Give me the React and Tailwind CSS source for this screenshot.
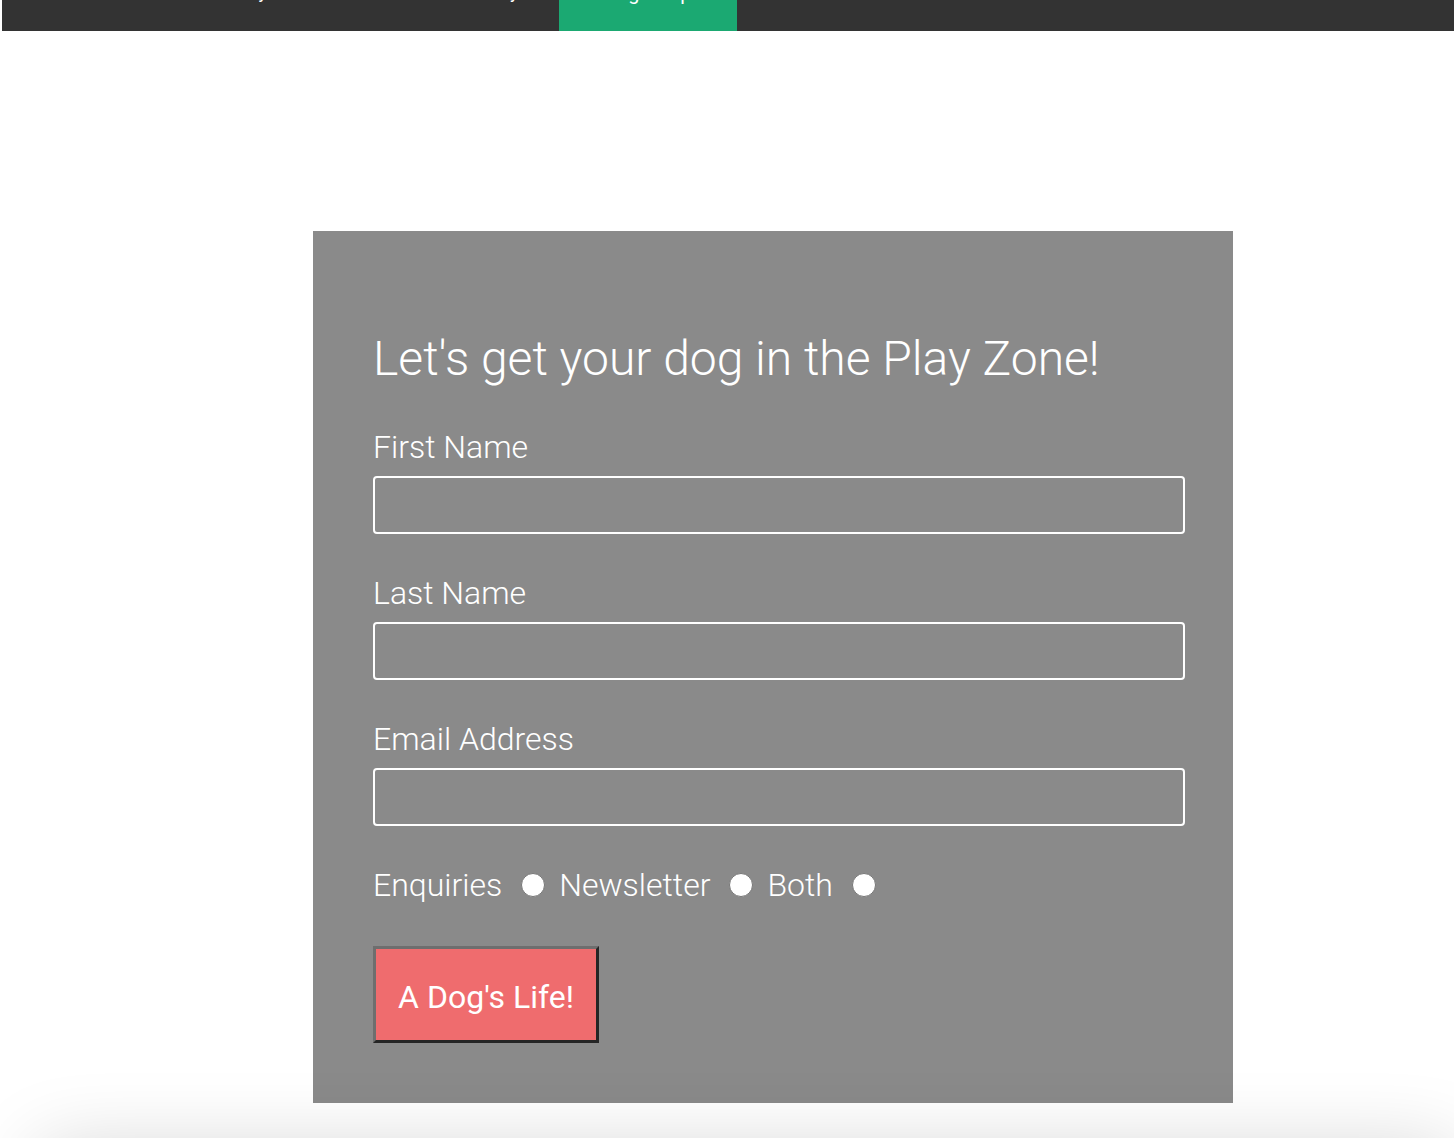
export default function App() {
  return (
    <div className="relative min-h-screen overflow-hidden bg-white font-['Roboto',sans-serif]">
      {/* Nav (scrolled, only descenders visible) */}
      <nav className="ml-[2px] flex h-[31px] overflow-hidden bg-[#333333] text-[18px] leading-none text-white">
        <div className="flex w-[557px]">
          <div className="-mt-[17px] pl-[210px]">Gallery</div>
          <div className="-mt-[17px] pl-[162px]">Our Facility</div>
        </div>
        <div className="flex w-[178px] justify-center bg-[#1ba972]">
          <div className="-mt-[17px] pl-[4px] text-[20px] tracking-[3px]">Sign Up</div>
        </div>
      </nav>

      {/* Form */}
      <div className="ml-[313px] mt-[200px] w-[920px] bg-[#8a8a8a] pb-[60px] pl-[60px] pt-[99px] font-light text-white">
        <h2 className="text-[48px] leading-[58px]">
          Let's get your dog in the Play Zone!
        </h2>

        <form className="mt-[39px] flex flex-col">
          <Field label="First Name" />
          <Field label="Last Name" />
          <Field label="Email Address" />

          <div className="flex h-[40px] items-center text-[32px] leading-[40px]">
            <span>Enquiries</span>
            <Radio />
            <span>Newsletter</span>
            <Radio />
            <span>Both</span>
            <Radio />
          </div>

          <div className="mt-[41px]">
            <button
              type="button"
              className="h-[97px] w-[226px] border-[3px] border-b-[#252525] border-l-[#6e6e6e] border-r-[#252525] border-t-[#6e6e6e] bg-[#ef6c6e] pt-[5px] text-[32px] font-normal text-white"
            >
              A Dog's Life!
            </button>
          </div>
        </form>
      </div>

      {/* Footer shadow */}
      <div className="ml-[40px] mt-[47px] h-[200px] bg-white shadow-[0_0_80px_rgba(0,0,0,0.18)]" />
    </div>
  );
}

function Field({ label }) {
  return (
    <label className="mb-[39px] flex flex-col">
      <span className="text-[32px] leading-[40px]">{label}</span>
      <input
        type="text"
        className="mt-[9px] h-[58px] w-[812px] rounded-[4px] border-2 border-white bg-transparent px-3 text-[20px] outline-none"
      />
    </label>
  );
}

function Radio() {
  return (
    <span className="ml-[19px] mr-[14px] inline-block h-[24px] w-[24px] shrink-0 rounded-full border border-[#777] bg-white" />
  );
}
